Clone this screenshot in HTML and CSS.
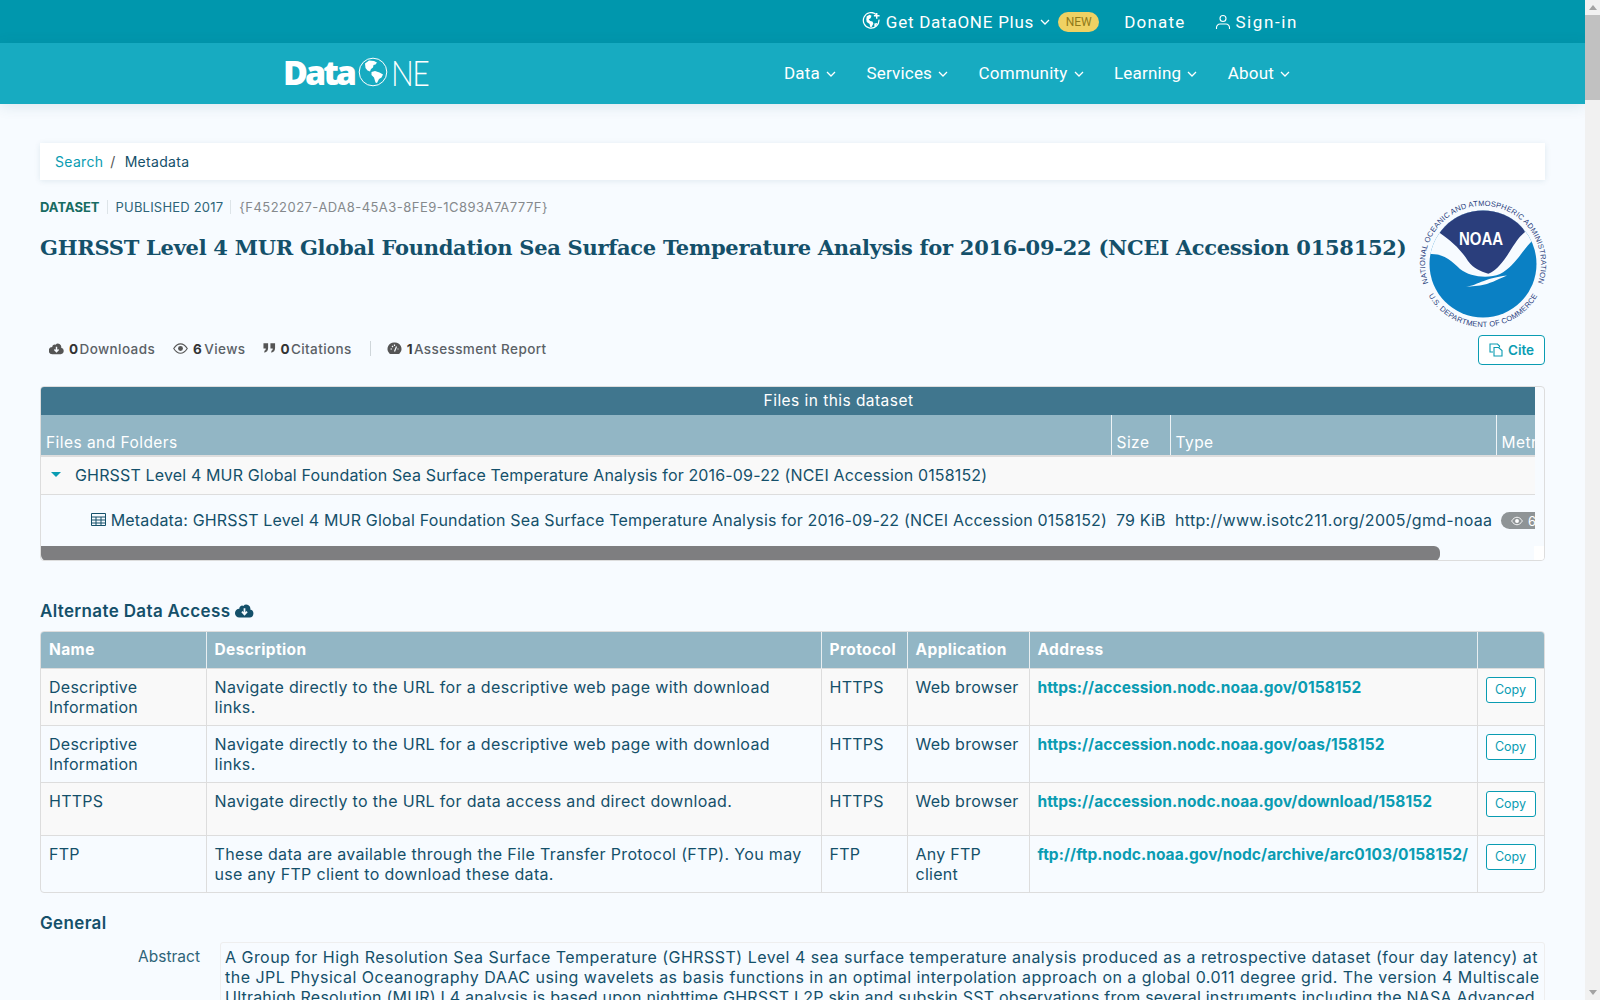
FILE: index.html
```html
<!DOCTYPE html>
<html lang="en">
<head>
  <meta charset="UTF-8" />
  <title>GHRSST Level 4 MUR Global Foundation Sea Surface Temperature Analysis | DataONE</title>
  <link rel="stylesheet" href="styles.css">
</head>
<body>
  <div class="page">
    <header>
      <div class="topbar">
        <a class="top-link plus">
          <svg class="i-globe" viewBox="0 0 20 20"><path d="M15 2.600A8.200 8.200 0 1 0 17.800 8" fill="none" stroke="#fff" stroke-width="1.300"/><path d="M5 4.500l3-1.500 2 1-1 2.500-2 1 1.500 2 2.500.5 1 2-2 4-1.500-.5-.5-3-3-2-.5-3zM13 12l3-.5-1 3-2 1z" fill="#fff"/><path d="M15.500 1v6M12.500 4h6" stroke="#fff" stroke-width="1.500"/></svg>
          <span>Get DataONE Plus</span>
          <svg class="chev" viewBox="0 0 10 6"><path d="M1 1l4 4 4-4" /></svg>
        </a>
        <span class="badge-new">NEW</span>
        <a class="top-link wide">Donate</a>
        <a class="top-link wide signin">
          <svg class="i-user" viewBox="0 0 16 16"><circle cx="8" cy="4.500" r="3" /><path d="M1.500 15v-1.500a3.500 3.500 0 0 1 3.500-3.500h6a3.500 3.500 0 0 1 3.500 3.500V15" /></svg>
          <span>Sign-in</span>
        </a>
      </div>
      <div class="navbar">
        <a class="logo">
          <span class="logo-data">Data</span>
          <svg class="logo-globe" viewBox="0 0 30 30">
            <circle cx="15" cy="15" r="13.800" fill="none" stroke="#fff" stroke-width="1"/>
            <path d="M7 6.500l4-3 5 .5 3 1.500-1.500 2-2 .5-.5 2.500-2 1.500-1 2.500-2.500-1-2-2.500z" fill="#fff"/>
            <path d="M13.500 15l3.500-1 4.500 1.500 3.500 2-1.500 3-2.500 1.500-2 4-1.500-.5-1.500-5-2.500-2.500z" fill="#fff"/>
          </svg>
          <span class="logo-ne">NE</span>
        </a>
        <nav class="main-nav">
          <a>Data <svg class="chev" viewBox="0 0 10 6"><path d="M1 1l4 4 4-4" /></svg></a>
          <a>Services <svg class="chev" viewBox="0 0 10 6"><path d="M1 1l4 4 4-4" /></svg></a>
          <a>Community <svg class="chev" viewBox="0 0 10 6"><path d="M1 1l4 4 4-4" /></svg></a>
          <a>Learning <svg class="chev" viewBox="0 0 10 6"><path d="M1 1l4 4 4-4" /></svg></a>
          <a>About <svg class="chev" viewBox="0 0 10 6"><path d="M1 1l4 4 4-4" /></svg></a>
        </nav>
      </div>
    </header>

    <main class="content">
      <div class="breadcrumb"><a>Search</a><span class="sep">/</span><span>Metadata</span></div>

      <section class="summary">
        <div class="summary-text">
          <div class="meta-line">
            <strong>DATASET</strong>
            <span class="pub">PUBLISHED 2017</span>
            <span class="uuid">{F4522027-ADA8-45A3-8FE9-1C893A7A777F}</span>
          </div>
          <h1>GHRSST Level 4 MUR Global Foundation Sea Surface Temperature Analysis for 2016-09-22 (NCEI Accession 0158152)</h1>
        </div>
        <svg class="noaa" viewBox="0 0 130 130">
          <defs>
            <path id="arcTop" d="M11 86A58 58 0 1 1 119 86" />
            <path id="arcBottom" d="M9.600 95A63 63 0 0 0 120.400 95" />
            <clipPath id="disc"><circle cx="65" cy="65" r="53.500" /></clipPath>
          </defs>
          <circle cx="65" cy="65" r="53.500" fill="#0a80c4" />
          <g clip-path="url(#disc)">
            <path d="M0 0H130V38L113.700 42.300C104 52 96 68 82 75C70 80 52 78 42 70C33 62 25 52 5 56Z" fill="#f7fbff" />
            <path d="M21.500 33.700L40 0H90L107 33C98 40 93 52 86 61C80 69 75 73 70.300 74.700C62 72 56 70 50 62C44 52 34 42 21.500 33.700Z" fill="#2a3e7c" />
            <path d="M47 88C58 87 66 79 89 76.500C78 81 72 85 62 86.500Z" fill="#f7fbff" />
          </g>
          <text class="noaa-name" x="41" y="46" textLength="44" lengthAdjust="spacingAndGlyphs">NOAA</text>
          <text class="noaa-ring"><textPath href="#arcTop" startOffset="50%" text-anchor="middle">NATIONAL OCEANIC AND ATMOSPHERIC ADMINISTRATION</textPath></text>
          <text class="noaa-ring"><textPath href="#arcBottom" startOffset="50%" text-anchor="middle">U.S. DEPARTMENT OF COMMERCE</textPath></text>
        </svg>
      </section>

      <section class="stats-row">
        <div class="stats">
          <span class="stat">
            <svg class="i-stat" viewBox="0 0 16 13"><path d="M13 5.600A3.500 3.500 0 0 0 7 2.500 2.500 2.500 0 0 0 3.500 5 3.500 3.500 0 0 0 3.500 12.500h9A3.500 3.500 0 0 0 13 5.600z" fill="#555"/><path d="M8 4.500v5M5.800 7.500L8 10l2.200-2.500" stroke="#f7fbff" stroke-width="1.500" fill="none"/></svg>
            <b>0</b><span>Downloads</span>
          </span>
          <span class="stat">
            <svg class="i-stat" viewBox="0 0 16 12"><path d="M.8 6C3 2.500 5.500 1 8 1s5 1.500 7.200 5C13 9.500 10.500 11 8 11S3 9.500.8 6z" fill="none" stroke="#555" stroke-width="1.200"/><circle cx="8" cy="6" r="2.600" fill="#555"/></svg>
            <b class="gap">6</b><span>Views</span>
          </span>
          <span class="stat">
            <svg class="i-stat i-quote" viewBox="0 0 14 12"><path d="M.5 1h5v5c0 3-1.500 4.500-4 5V9c1-.3 1.500-1 1.500-2.500H.5zM8 1h5v5c0 3-1.500 4.500-4 5V9c1-.3 1.500-1 1.500-2.500H8z" fill="#555"/></svg>
            <b>0</b><span>Citations</span>
          </span>
          <span class="stat-sep"></span>
          <span class="stat">
            <svg class="i-stat" viewBox="0 0 14 13"><path d="M7 .5a6.500 6.500 0 0 0-5.300 10.800c.3.400.7.700 1.200.700h8.200c.5 0 .9-.3 1.200-.7A6.500 6.500 0 0 0 7 .5z" fill="#555"/><path d="M7 9.500l2-5M3 7h1.500M4.500 4l1 1M7 2.500V4M10 7h1" stroke="#f7fbff" stroke-width="1.200"/></svg>
            <b>1</b><span>Assessment Report</span>
          </span>
        </div>
        <button class="cite">
          <svg class="i-copy" viewBox="0 0 14 14"><path d="M5 1h3.500l2 2v1.500M5 1H1v8h3" /><path d="M5 4.500h4.500l3.500 3V13H5z" /></svg>
          Cite
        </button>
      </section>

      <section class="files">
        <div class="files-clip">
          <table class="files-table">
            <colgroup><col class="c-name"><col class="c-size"><col class="c-type"><col class="c-metrics"></colgroup>
            <tr class="files-caption"><th colspan="4">Files in this dataset</th></tr>
            <tr class="files-head"><th>Files and Folders</th><th>Size</th><th>Type</th><th>Metrics</th></tr>
            <tr class="folder-row">
              <td colspan="4"><span class="caret"></span>GHRSST Level 4 MUR Global Foundation Sea Surface Temperature Analysis for 2016-09-22 (NCEI Accession 0158152)</td>
            </tr>
            <tr class="file-row">
              <td class="file-name">
                <svg class="i-table" viewBox="0 0 15 13"><path d="M.5.500h14v12H.500zM.5 4h14M.5 7h14M.5 10h14M5 4v8.500M10 4v8.500" /></svg>
                Metadata: GHRSST Level 4 MUR Global Foundation Sea Surface Temperature Analysis for 2016-09-22 (NCEI Accession 0158152)
              </td>
              <td>79 KiB</td>
              <td class="file-type">http://www.isotc211.org/2005/gmd-noaa</td>
              <td><span class="views-pill"><svg viewBox="0 0 16 12"><path d="M.8 6C3 2.500 5.500 1 8 1s5 1.500 7.200 5C13 9.500 10.500 11 8 11S3 9.500.8 6z" fill="none" stroke="#fff" stroke-width="1.200"/><circle cx="8" cy="6" r="2.600" fill="#fff"/></svg><span>6 views</span></span></td>
            </tr>
          </table>
        </div>
        <div class="hscroll"><div class="hscroll-thumb"></div><div class="hscroll-corner"></div></div>
      </section>

      <h2 class="section-title">Alternate Data Access
        <svg class="i-cloud" viewBox="0 0 16 13"><path d="M13 5.600A3.500 3.500 0 0 0 7 2.500 2.500 2.500 0 0 0 3.500 5 3.500 3.500 0 0 0 3.500 12.500h9A3.500 3.500 0 0 0 13 5.600z" fill="#14506a"/><path d="M8 4.500v5M5.800 7.500L8 10l2.200-2.500" stroke="#f7fbff" stroke-width="1.500" fill="none"/></svg>
      </h2>
      <div class="access-wrap">
        <table class="access">
          <thead>
            <tr><th class="a-name">Name</th><th class="a-desc">Description</th><th class="a-proto">Protocol</th><th class="a-app">Application</th><th class="a-addr">Address</th><th class="a-copy"></th></tr>
          </thead>
          <tbody>
            <tr class="odd">
              <td>Descriptive Information</td>
              <td class="desc">Navigate directly to the URL for a descriptive web page with download links.</td>
              <td>HTTPS</td><td>Web browser</td>
              <td><a>https://accession.nodc.noaa.gov/0158152</a></td>
              <td><button class="copy">Copy</button></td>
            </tr>
            <tr>
              <td>Descriptive Information</td>
              <td class="desc">Navigate directly to the URL for a descriptive web page with download links.</td>
              <td>HTTPS</td><td>Web browser</td>
              <td><a>https://accession.nodc.noaa.gov/oas/158152</a></td>
              <td><button class="copy">Copy</button></td>
            </tr>
            <tr class="odd">
              <td>HTTPS</td>
              <td class="desc">Navigate directly to the URL for data access and direct download.</td>
              <td>HTTPS</td><td>Web browser</td>
              <td><a>https://accession.nodc.noaa.gov/download/158152</a></td>
              <td><button class="copy">Copy</button></td>
            </tr>
            <tr>
              <td>FTP</td>
              <td class="desc">These data are available through the File Transfer Protocol (FTP). You may use any FTP client to download these data.</td>
              <td>FTP</td><td>Any FTP client</td>
              <td><a>ftp://ftp.nodc.noaa.gov/nodc/archive/arc0103/0158152/</a></td>
              <td><button class="copy">Copy</button></td>
            </tr>
          </tbody>
        </table>
      </div>

      <h2 class="section-title general">General</h2>
      <div class="field">
        <div class="field-label">Abstract</div>
        <div class="field-value"><span class="abstract-lead">A Group for High Resolution Sea Surface Temperature (GHRSST) Level 4 sea surface temperature analysis produced as a retrospective dataset (four day latency) at the JPL Physical Oceanography DAAC using wavelets as basis functions in an optimal interpolation approach on a global 0.011 degree grid. The version 4 Multiscale</span> Ultrahigh Resolution (MUR) L4 analysis is based upon nighttime GHRSST L2P skin and subskin SST observations from several instruments including the NASA Advanced Microwave Scanning Radiometer-EOS (AMSR-E), the JAXA Advanced Microwave Scanning Radiometer 2 on GCOM-W1, the Moderate Resolution Imaging Spectroradiometers (MODIS) on the NASA Aqua and Terra platforms.</div>
      </div>
    </main>
  </div>
  <aside class="page-scroll">
    <span class="arrow up"></span>
    <span class="page-thumb"></span>
    <span class="arrow down"></span>
  </aside>
</body>
</html>
```

FILE: styles.css
```css
:root {
  --ink: #14506a;
  --teal: #0a9cb2;
  --top-bg: #0097ad;
  --nav-bg: #17abc1;
  --page-bg: #f7fbff;
  --head-bg: #92b6c5;
  --head-dark: #40768e;
  --line: #dddddd;
}
* { box-sizing: border-box; }
html, body { height: 100%; }
body {
  margin: 0;
  display: flex;
  height: 1000px;
  overflow: hidden;
  background: var(--page-bg);
  color: var(--ink);
  font-family: Inter, "Open Sans", sans-serif;
  font-size: 16px;
  line-height: 20px;
}
.page { flex: 1; min-width: 0; overflow: hidden; }

/* header */
.topbar {
  height: 43px;
  background: var(--top-bg);
  display: flex;
  align-items: center;
  justify-content: flex-end;
  padding-right: 287px;
  color: #fff;
  font-family: Roboto, sans-serif;
}
.top-link { display: flex; align-items: center; font-size: 17px; letter-spacing: .75px; }
.top-link.wide { letter-spacing: 1.2px; margin-left: 25px; }
.top-link.signin { letter-spacing: 1.6px; margin-left: 30px; }
.i-globe { width: 19px; height: 19px; margin-right: 5px; }
.chev { width: 10px; height: 6px; margin-left: 6px; fill: none; stroke: #fff; stroke-width: 1.3; }
.i-user { width: 16px; height: 16px; margin-right: 4px; fill: none; stroke: #fff; stroke-width: 1.100; }
.badge-new {
  width: 41px;
  height: 20px;
  margin-left: 8px;
  border-radius: 10px;
  background: #efd163;
  color: #8f7a1a;
  font-size: 12px;
  line-height: 20px;
  text-align: center;
}
.navbar {
  height: 61px;
  background: var(--nav-bg);
  display: flex;
  align-items: center;
  padding: 0 295px 0 283px;
  color: #fff;
  font-family: Roboto, sans-serif;
  box-shadow: 0 2px 14px rgba(20, 80, 106, .12);
  position: relative;
}
.logo { display: flex; align-items: center; color: #fff; margin-bottom: 3px; }
.logo-data { font-family: "Open Sans", sans-serif; font-weight: 800; font-size: 34px; line-height: 34px; letter-spacing: -3px; }
.logo-globe { width: 30px; height: 30px; margin-left: 4px; }
.logo-ne {
  font-family: Lato, sans-serif;
  font-weight: 300;
  font-size: 36px;
  line-height: 34px;
  letter-spacing: -2px;
  margin-left: 3px;
  transform: scaleX(.84);
  transform-origin: left center;
}
.main-nav { margin-left: auto; display: flex; gap: 30.500px; font-size: 17px; letter-spacing: .2px; padding-bottom: 2px; }
.main-nav a { display: flex; align-items: center; }
.main-nav .chev { margin-top: 3px; }

/* breadcrumb and title */
.content { padding: 39px 40px 0; }
.breadcrumb {
  height: 37px;
  background: #fff;
  padding: 9px 15px;
  font-size: 14px;
  letter-spacing: .3px;
  box-shadow: 0 1px 6px rgba(20, 80, 106, .1);
}
.breadcrumb a { color: var(--teal); }
.sep { margin: 0 9px 0 7px; color: #555; }
.summary { display: flex; justify-content: space-between; height: 155px; padding-top: 17px; }
.summary-text { min-width: 0; }
.meta-line { display: flex; align-items: center; font-size: 13px; line-height: 20px; }
.meta-line strong { color: #176b62; font-weight: 700; }
.meta-line span { margin-left: 7px; padding-left: 8px; border-left: 1px solid #dde4e8; line-height: 14px; }
.pub { color: #2e6478; letter-spacing: .2px; }
.uuid { color: #85898c; letter-spacing: .47px; }
h1 {
  margin: 15px 0 0;
  font-family: "DejaVu Serif", serif;
  font-weight: 700;
  font-size: 21px;
  line-height: 32px;
  letter-spacing: -.28px;
  white-space: nowrap;
}
.noaa { width: 130px; height: 130px; flex: none; margin-top: 2px; margin-right: -3px; }
.noaa-name { font-family: "Liberation Sans", sans-serif; font-weight: 700; font-size: 19px; fill: #fff; }
.noaa-ring { font-family: "Liberation Sans", sans-serif; font-size: 7.500px; letter-spacing: .18px; fill: #2a3e7c; }

/* stats */
.stats-row { display: flex; align-items: center; justify-content: space-between; height: 29px; }
.stats { display: flex; align-items: center; padding: 0 0 2px 9px; font-size: 13.500px; font-weight: 500; color: #5b6166; letter-spacing: .4px; }
.stat { display: flex; align-items: center; margin-right: 18px; white-space: nowrap; }
.stat b { color: #333; font-weight: 700; margin-right: 1px; }
.stat b.gap { margin-right: 2px; }
.i-stat { width: 15px; height: 13px; margin-right: 5px; }
.i-quote { width: 13px; height: 14px; margin-right: 4px; margin-bottom: 2px; }
.stat-sep { width: 1px; height: 15px; background: #cfd6da; margin-right: 16px; }
.cite {
  width: 67px;
  height: 30px;
  display: flex;
  align-items: center;
  justify-content: center;
  background: #fff;
  color: var(--teal);
  border: 1px solid var(--teal);
  border-radius: 4px;
  font-family: Inter, sans-serif;
  font-size: 13.500px;
  font-weight: 600;
  padding: 0;
}
.i-copy { width: 14px; height: 14px; margin-right: 5px; fill: none; stroke: var(--teal); stroke-width: 1.100; }

/* files table */
.files {
  margin-top: 22px;
  height: 175px;
  border: 1px solid var(--line);
  border-radius: 4px;
  overflow: hidden;
}
.files-clip { width: 1494px; height: 159px; overflow: hidden; }
.files-table { width: 1595px; table-layout: fixed; border-collapse: collapse; letter-spacing: .15px; }
.c-name { width: 1070px; }
.c-size { width: 59px; }
.c-type { width: 326px; }
.files-caption th {
  height: 28px;
  padding: 0;
  background: var(--head-dark);
  color: #fff;
  font-weight: 400;
  font-size: 15.500px;
  letter-spacing: .45px;
  text-align: center;
}
.files-head th {
  height: 41px;
  padding: 15px 5px 0;
  background: var(--head-bg);
  color: #fff;
  font-weight: 400;
  text-align: left;
  font-size: 15.500px;
  letter-spacing: .45px;
  border-left: 1px solid #eef3f6;
  border-bottom: 2px solid var(--line);
}
.files-head th:first-child { border-left: 0; }
.folder-row td {
  height: 38px;
  padding: 0 5px 1px 34px;
  background: #f9f9f9;
  border-bottom: 1px solid var(--line);
  white-space: nowrap;
}
.caret {
  display: inline-block;
  width: 0;
  height: 0;
  margin: 0 14px 3px -24px;
  border: 5px solid transparent;
  border-top-color: var(--teal);
  border-bottom: 0;
  vertical-align: middle;
}
.file-row td { height: 48px; padding: 3px 5px 0; white-space: nowrap; }
.file-row .file-name { padding-left: 50px; letter-spacing: .17px; }
.file-row .file-type { letter-spacing: .3px; }
.i-table { width: 15px; height: 13px; fill: none; stroke: var(--ink); stroke-width: 1; }
.views-pill {
  display: inline-flex;
  align-items: center;
  height: 17px;
  padding: 0 8px 0 10px;
  border-radius: 9px;
  background: #8f9496;
  color: #fff;
  font-size: 13px;
  white-space: nowrap;
}
.views-pill svg { width: 12px; height: 10px; margin-right: 5px; }
.hscroll { display: flex; justify-content: space-between; height: 15px; }
.hscroll-thumb { width: 1399px; height: 15px; background: #7e7e80; border-radius: 0 6px 6px 6px; }
.hscroll-corner { width: 10px; background: #fff; }

/* access table */
.section-title { margin: 0; font-size: 17px; line-height: 22px; font-weight: 600; letter-spacing: .35px; }
.section-title:not(.general) { margin-top: 39px; }
.i-cloud { width: 19px; height: 15px; vertical-align: -1px; }
.access-wrap {
  margin-top: 9px;
  border: 1px solid var(--line);
  border-radius: 4px;
  overflow: hidden;
}
.access { width: 100%; table-layout: fixed; border-collapse: collapse; letter-spacing: .25px; }
.a-name { width: 165px; }
.a-desc { width: 615px; }
.a-proto { width: 86px; }
.a-app { width: 122px; }
.a-addr { width: 448px; }
.access th {
  height: 36px;
  padding: 0 8px;
  background: var(--head-bg);
  color: #fff;
  text-align: left;
  font-size: 15.500px;
  font-weight: 700;
  letter-spacing: .4px;
  border-left: 1px solid #e8eef1;
}
.access th:first-child, .access td:first-child { border-left: 0; }
.access td {
  padding: 8px;
  vertical-align: top;
  border-left: 1px solid var(--line);
  border-top: 1px solid var(--line);
}
.access td.desc { padding-right: 12px; letter-spacing: .34px; }
.access tr.odd td { background: #f9f9f9; }
.access a { color: var(--teal); font-size: 15.500px; font-weight: 700; letter-spacing: .07px; white-space: nowrap; }
.copy {
  display: block;
  width: 50px;
  height: 26px;
  padding: 0;
  background: #fff;
  color: var(--teal);
  border: 1px solid var(--teal);
  border-radius: 3px;
  font-family: Inter, sans-serif;
  font-size: 12.500px;
  margin-bottom: 10px;
}

/* general */
.section-title.general { margin-top: 19px; }
.field { display: flex; margin-top: 8px; }
.field-label { width: 180px; flex: none; padding: 5px 20px 0 0; text-align: right; font-size: 15.500px; color: #2e6478; }
.field-value {
  flex: 1;
  border: 1px solid #eeeeee;
  border-radius: 3px;
  padding: 4px;
  letter-spacing: .22px;
}
.abstract-lead { letter-spacing: .47px; }

/* fake page scrollbar */
.page-scroll {
  width: 15px;
  flex: none;
  display: flex;
  flex-direction: column;
  background: #f1f1f1;
}
.page-thumb { height: 85px; background: #c1c1c1; }
.arrow { height: 15px; flex: none; display: flex; justify-content: center; align-items: center; }
.arrow.up::before {
  content: "";
  border: 4px solid transparent;
  border-bottom: 5px solid #a3a3a3;
  border-top: 0;
}
.arrow.down { margin-top: auto; }
.arrow.down::before {
  content: "";
  border: 4px solid transparent;
  border-top: 5px solid #a3a3a3;
  border-bottom: 0;
}
```
